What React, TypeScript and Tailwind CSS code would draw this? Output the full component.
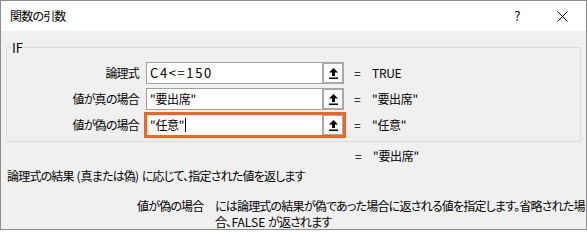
import React from "react";

const FONT = "font-['Yu_Gothic_UI','Noto_Sans_CJK_JP',sans-serif] [font-feature-settings:'palt'] tracking-[-0.8px]";

const ARGS = [
  { label: "論理式", value: "C4<=150", result: "TRUE", focused: false, wide: true },
  { label: "値が真の場合", value: "\"要出席\"", result: "\"要出席\"", focused: false, wide: false },
  { label: "値が偽の場合", value: "\"任意\"", result: "\"任意\"", focused: true, wide: false },
];

function CollapseIcon() {
  return (
    <svg width="9" height="11" viewBox="0 0 9 11">
      <path d="M4.5 0 L9 4.5 H6 V8 H3 V4.5 H0 Z" fill="#000" />
      <rect x="0" y="9.5" width="9" height="1.5" fill="#000" />
    </svg>
  );
}

function ArgRow({ label, value, result, focused, wide }: (typeof ARGS)[number]) {
  return (
    <div className="flex h-[22px] items-center">
      <div className="w-[133px] shrink-0 pr-[1px] text-right whitespace-nowrap">{label}</div>
      <div
        className={`ml-[6px] flex h-[22px] w-[198px] shrink-0 border border-[#a0a0a0] bg-white ${
          focused ? "outline-[3px] outline-solid outline-[#f26522] outline-offset-[-1px]" : ""
        }`}
      >
        <div
          className={`flex flex-1 items-center pl-[3px] whitespace-nowrap ${
            wide ? "text-[13px] tracking-[1.6px]" : "tracking-[-0.3px]"
          }`}
        >
          {value}
          {focused && <span className="ml-[1px] h-[14px] w-px bg-black" />}
        </div>
        <div className="-my-px -mr-px flex w-[22px] items-center justify-center border-2 border-[#a8a8a8] bg-[#fbfbfb]">
          <CollapseIcon />
        </div>
      </div>
      <div className="ml-[10px] w-[18px] shrink-0">=</div>
      <div className="whitespace-nowrap tracking-[-0.3px]">{result}</div>
    </div>
  );
}

export default function App() {
  return (
    <div
      className={`flex h-[230px] w-[587px] flex-col overflow-hidden border border-[#8c8c8c] bg-[#f0f0f0] text-[12px] leading-[16px] text-black ${FONT}`}
    >
      <div className="flex h-[30px] shrink-0 items-center bg-white">
        <div className="pl-[9px]">関数の引数</div>
        <div className="ml-auto flex items-center">
          <span className="w-[14px] text-center text-[13px]">?</span>
          <span className="ml-[32px] mr-[18px] flex h-[12px] w-[12px] items-center justify-center">
            <svg width="11" height="11" viewBox="0 0 11 11">
              <path d="M0.5 0.5 L10.5 10.5 M10.5 0.5 L0.5 10.5" stroke="#000" strokeWidth="1" />
            </svg>
          </span>
        </div>
      </div>

      <div className="flex flex-1 flex-col">
        <fieldset className="mx-[5px] mt-[8px] border border-[#dcdcdc] pb-[5px]">
          <legend className="ml-[4px] px-[1px] text-[13px] leading-[17px] tracking-normal">IF</legend>
          <div className="mt-[6px] flex flex-col gap-[4px]">
            {ARGS.map((a) => (
              <ArgRow key={a.label} {...a} />
            ))}
          </div>
        </fieldset>

        <div className="mt-[6px] flex pl-[354px]">
          <div className="w-[18px]">=</div>
          <div className="tracking-[-0.3px]">"要出席"</div>
        </div>
        <div className="mt-[4px] pl-[6px] whitespace-nowrap">
          論理式の結果<span className="tracking-normal"> (</span>真または偽<span className="tracking-normal">) </span>
          に応じて、指定された値を返します
        </div>

        <div className="mt-[14px] flex pl-[136px] leading-[16px]">
          <div className="w-[78px] shrink-0 whitespace-nowrap">値が偽の場合</div>
          <div className="whitespace-nowrap">
            <div>には論理式の結果が偽であった場合に返される値を指定します。省略された場</div>
            <div>
              合、<span className="tracking-normal">FALSE </span>が返されます
            </div>
          </div>
        </div>
      </div>
    </div>
  );
}
